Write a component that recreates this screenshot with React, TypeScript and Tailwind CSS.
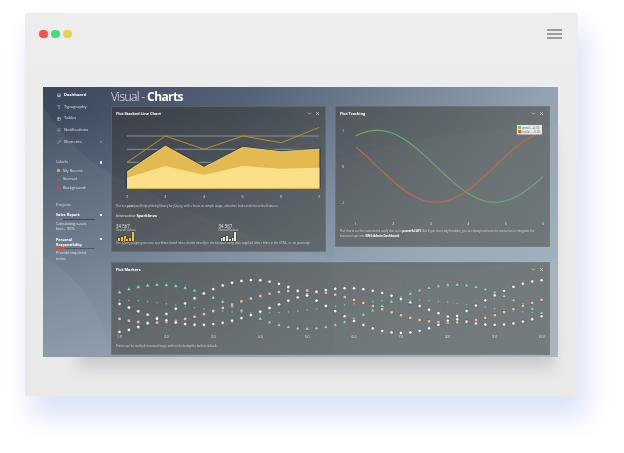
import { ChevronDown, ChevronLeft, Home, Type, Table2, Bell, Pencil, X } from "lucide-react";
import type { ReactNode } from "react";

const navItems = [
  { label: "Typography", icon: Type },
  { label: "Tables", icon: Table2 },
  { label: "Notifications", icon: Bell },
];

const labelItems = [
  { label: "My Recent", dot: "bg-[#ffc107]" },
  { label: "Starred", dot: "bg-[#6c7480]" },
  { label: "Background", dot: "bg-[#e8491d]" },
];

const markerSeries = [
  { amp: 0.45, off: 7, kind: "diamond" },
  { amp: 1.5, off: 6, kind: "triangle" },
  { amp: 1.1, off: 3, kind: "square" },
  { amp: 1.25, off: 2, kind: "circle" },
  { amp: 1.8, off: 4, kind: "circle" },
];

function PanelControls() {
  return (
    <div className="flex items-center gap-[3px] text-[#d5d8dc]">
      <ChevronDown size={5} strokeWidth={3} />
      <X size={5} strokeWidth={3} />
    </div>
  );
}

function Panel({ title, className, children }: { title: string; className: string; children: ReactNode }) {
  return (
    <section className={`border border-[#7d8894]/40 bg-[#2e2a20]/[.42] ${className}`}>
      <header className="flex h-[13px] items-center justify-between pl-[4px] pr-[5px]">
        <h3 className="text-[3.9px] font-bold text-white">{title}</h3>
        <PanelControls />
      </header>
      {children}
    </section>
  );
}

function StackedChart() {
  const xs = [15, 53.4, 92, 130.6, 169.2, 207.4];
  const line = [42.3, 16, 29.3, 16, 22.7, 7.3];
  const mid = [51.7, 26, 47.3, 27.3, 31.7, 29];
  const low = [57.7, 46, 55, 46, 48.7, 47.7];
  const base = 68.3;
  const pts = (ys: number[]) => ys.map((y, i) => `${xs[i]},${y}`).join(" ");
  const area = (ys: number[]) => `${xs[0]},${base} ${pts(ys)} ${xs[5]},${base}`;
  return (
    <svg width={215} height={81} className="block">
      {[16, 29.3, 42.3].map((y) => (
        <line key={y} x1={15} x2={207} y1={y} y2={y} stroke="#8d9196" strokeWidth={1} />
      ))}
      <polyline points={area(mid)} fill="none" stroke="#2c3a58" strokeWidth={2.4} />
      <polygon points={area(mid)} fill="#e3ba50" />
      <polyline points={pts(mid)} fill="none" stroke="#fbd45f" strokeWidth={0.8} />
      <polygon points={area(low)} fill="#fedf89" />
      <line x1={15} x2={207.4} y1={base} y2={base} stroke="#f5c94f" strokeWidth={0.8} />
      <polyline points={pts(line)} fill="none" stroke="#b8922a" strokeWidth={1} />
      {[2, 3, 4, 5, 6, 7].map((n, i) => (
        <text key={n} x={xs[i]} y={77.5} fontSize={3.6} fill="#dfe2e5" textAnchor="middle">
          {n}
        </text>
      ))}
    </svg>
  );
}

function Sparkline({ values, color }: { values: number[]; color: string }) {
  return (
    <div className="ml-[2px] flex h-[9px] items-end gap-[0.8px]">
      {values.map((h, i) => (
        <div key={i} className={`w-[2px] shadow-[0_0_0_0.5px_#2c3a58] ${color}`} style={{ height: h }} />
      ))}
    </div>
  );
}

function SparkStat({ color, values }: { color: string; values: number[] }) {
  return (
    <div className="w-[107px]">
      <p className="text-[4.4px] leading-[4px] text-[#e6e8ea]">34 567</p>
      <p className="text-[3px] leading-[4px] text-[#d4d7da]">Overall Values</p>
      <Sparkline values={values} color={color} />
    </div>
  );
}

function TrackingChart() {
  const toX = (x: number) => 19.7 + (x - 1) * 37.5;
  const toY = (y: number) => 46.3 - y * 36;
  const curve = (fn: (x: number) => number) => {
    const out: string[] = [];
    for (let x = 1; x <= 6.001; x += 0.1) out.push(`${toX(x).toFixed(1)},${toY(fn(x)).toFixed(1)}`);
    return out.join(" ");
  };
  return (
    <svg width={215} height={109} className="block">
      <polyline points={curve(Math.sin)} fill="none" stroke="#71a96a" strokeWidth={1.1} />
      <polyline points={curve(Math.cos)} fill="none" stroke="#c9693f" strokeWidth={1.1} />
      {[1, 0, -1].map((n) => (
        <text key={n} x={7} y={toY(n) + 1.3} fontSize={3.6} fill="#dfe2e5" textAnchor="middle">
          {n}
        </text>
      ))}
      {[1, 2, 3, 4, 5, 6].map((n) => (
        <text key={n} x={toX(n)} y={105} fontSize={3.6} fill="#dfe2e5" textAnchor="middle">
          {n}
        </text>
      ))}
      <rect x={181} y={5} width={25} height={9.5} fill="#f2f3f4" fillOpacity={0.92} />
      <rect x={182} y={6} width={3} height={3} fill="#63d455" />
      <rect x={182} y={10} width={3} height={3} fill="#f15a22" />
      <text x={186} y={8.8} fontSize={3} fill="#555b62">sin(x) = -0.33</text>
      <text x={186} y={12.8} fontSize={3} fill="#555b62">cos(x) = -0.35</text>
    </svg>
  );
}

function MarkerChart() {
  const toX = (x: number) => 7.5 + (x - 1) * 46.9;
  const toY = (y: number) => 30.5 - y * 14.7;
  const ticks = [1, 2, 3, 4, 5, 6, 7, 8, 9, 10];
  const marks: ReactNode[] = [];
  markerSeries.forEach((s) => {
    for (let i = 0; i <= 45; i++) {
      const x = 1 + i * 0.2;
      const cx = toX(x);
      const cy = toY(s.amp * Math.sin(x + s.off));
      const key = `${s.kind}-${s.off}-${i}`;
      if (s.kind === "circle") {
        marks.push(<circle key={key} cx={cx} cy={cy} r={1.7} fill="#fafafa" stroke="#3c4148" strokeWidth={0.5} />);
      } else if (s.kind === "square") {
        marks.push(<rect key={key} x={cx - 1.5} y={cy - 1.5} width={3} height={3} fill="#f2b8af" stroke="#4a4f55" strokeWidth={0.4} />);
      } else if (s.kind === "triangle") {
        marks.push(
          <polygon
            key={key}
            points={`${cx},${cy - 1.9} ${cx + 2},${cy + 1.5} ${cx - 2},${cy + 1.5}`}
            fill="#86e3d2"
            stroke="#454b52"
            strokeWidth={0.3}
          />,
        );
      } else {
        marks.push(<rect key={key} x={cx - 0.7} y={cy - 0.7} width={1.4} height={1.4} fill="#6fc4b2" transform={`rotate(45 ${cx} ${cy})`} />);
      }
    }
  });
  return (
    <svg width={437} height={66} className="block">
      {ticks.map((n) => (
        <line key={n} x1={toX(n)} x2={toX(n)} y1={4} y2={58} stroke="#ffffff" strokeOpacity={0.05} strokeWidth={0.5} />
      ))}
      {marks}
      {ticks.map((n) => (
        <text key={n} x={toX(n)} y={62} fontSize={3.4} fill="#dfe2e5" textAnchor="middle">
          {n.toFixed(1)}
        </text>
      ))}
    </svg>
  );
}

function Sidebar() {
  return (
    <aside className="relative w-[68px] shrink-0 pl-[13px] pr-[10px] text-[#dfe3e7]">
      <ul className="pt-[2px] text-[4.1px]">
        <li className="flex h-[12px] items-center gap-[3px] pl-[1px] font-bold text-white">
          <Home size={4} strokeWidth={2.5} />
          Dashboard
        </li>
        {navItems.map((item) => (
          <li key={item.label} className="flex h-[11.7px] items-center gap-[3px] pl-[1px]">
            <item.icon size={4} strokeWidth={2} />
            {item.label}
          </li>
        ))}
        <li className="flex h-[11.7px] items-center pl-[1px]">
          <Pencil size={4} strokeWidth={2} className="mr-[3px]" />
          Elements
          <ChevronLeft size={4} strokeWidth={3} className="ml-auto mr-[-2px]" />
        </li>
      </ul>

      <div className="mt-[10px] flex h-[9px] items-center justify-between text-[4px]">
        Labels
        <span className="mr-[-1px] h-[2.5px] w-[2.5px] rounded-full bg-white" />
      </div>
      <ul className="text-[4px]">
        {labelItems.map((item) => (
          <li key={item.label} className="flex h-[8.4px] items-center gap-[3px] pl-[1px]">
            <span className={`h-[3px] w-[3px] rounded-full ${item.dot}`} />
            {item.label}
          </li>
        ))}
      </ul>

      <p className="mt-[10px] h-[6px] text-[4px] leading-[6px]">Projects</p>
      <div className="mt-[4px] flex items-center justify-between text-[3.8px] font-bold leading-[6px] text-white">
        Sales Report
        <span className="mr-[-1px] h-[2.5px] w-[2.5px] bg-white" />
      </div>
      <div className="mt-[1px] h-[1px] w-[39px] bg-[#3e4a5a]">
        <div className="h-[1px] w-[7px] bg-[#3d8fd1]" />
      </div>
      <p className="mt-[1px] w-[34px] text-[3.8px] leading-[5.4px]">Calculating x-axis bias... 85%</p>

      <div className="mt-[5px] flex items-start justify-between text-[3.7px] font-bold leading-[5.7px] text-white">
        <span>
          Personal
          <br />
          Responsibility
        </span>
        <span className="mr-[-1px] mt-[1px] h-[2.5px] w-[2.5px] bg-white" />
      </div>
      <div className="h-[1.3px] w-[39px] bg-[#4d5966]">
        <div className="h-[1.3px] w-[9px] bg-[#e0431b]" />
      </div>
      <p className="mt-[1px] w-[32px] text-[3.8px] leading-[5.4px]">Provide required notes</p>
    </aside>
  );
}

export default function App() {
  return (
    <div className="h-[453px] w-[624px] overflow-hidden bg-white pl-[25px] pt-[13px] font-['Open_Sans',sans-serif]">
      <div className="flex h-[383px] w-[553px] flex-col rounded-t-[4px] bg-[linear-gradient(to_bottom,#ecedec,#e9e9e8)] shadow-[7px_18px_28px_2px_#d9e2f6]">
        <div className="flex h-[42px] shrink-0 items-center justify-between pl-[14px] pr-[16px]">
          <div className="flex gap-[3.5px]">
            <span className="h-[8.5px] w-[8.5px] rounded-full bg-[#fd4d52]" />
            <span className="h-[8.5px] w-[8.5px] rounded-full bg-[#3fe072]" />
            <span className="h-[8.5px] w-[8.5px] rounded-full bg-[#e8d34a]" />
          </div>
          <div className="flex w-[15px] flex-col gap-[2.5px]">
            <span className="h-[1.5px] bg-[#9a9c9c]" />
            <span className="h-[1.5px] bg-[#9a9c9c]" />
            <span className="h-[1.5px] bg-[#9a9c9c]" />
          </div>
        </div>

        <div className="ml-[18px] mt-[32px] w-[515px] shadow-[15px_30px_15px_-20px_#c8c8cc]">
          <div className="relative flex h-[270px] overflow-hidden bg-[linear-gradient(to_bottom,rgba(160,175,188,0)_10%,rgba(160,175,188,.6)),linear-gradient(125deg,#3a465a_0%,#556379_30%,#93a2b1_72%,#a0afbc_100%)] blur-[0.35px]">
            <svg width={515} height={270} className="absolute left-0 top-0">
              <path d="M0 18 C25 60 50 80 90 98 C170 135 230 165 330 178 C400 186 470 178 515 170 L515 270 L0 270 Z" fill="#ffffff" fillOpacity={0.05} />
              <path d="M0 170 C40 190 60 230 68 270 L0 270 Z" fill="#ffffff" fillOpacity={0.05} />
              <path d="M292 72 C370 50 450 42 515 38 L515 270 L292 270 Z" fill="#ffffff" fillOpacity={0.04} />
            </svg>

            <Sidebar />

            <main className="relative min-w-0 flex-1">
              <h1 className="flex h-[19px] items-center text-[12px] font-light leading-none tracking-[-0.6px] text-[#e8ebee]">
                Visual -&nbsp;<span className="font-bold text-white">Charts</span>
              </h1>

              <div className="flex items-start gap-[9px]">
                <Panel title="Flot Stacked Line Chart" className="h-[146px] w-[215px]">
                  <StackedChart />
                  <div className="px-[4px]">
                    <p className="mt-[3px] whitespace-nowrap text-[2.9px] leading-[5px] text-[#d4d7da]">
                      Flot is a <b>pure</b> JavaScript plotting library for jQuery, with a focus on simple usage, attractive looks and interactive features.
                    </p>
                    <h4 className="mt-[4px] text-[3.95px] leading-[6px] text-[#e6e8ea]">
                      Interactive <b className="text-white">Sparklines</b>
                    </h4>
                    <div className="mt-[5px] flex">
                      <SparkStat values={[3, 4, 5, 2, 3, 9]} color="bg-[#f2bf35]" />
                      <SparkStat values={[3, 4, 5, 2, 3, 9]} color="bg-[#f3e7bd]" />
                    </div>
                    <p className="whitespace-nowrap text-[2.9px] leading-[4px] text-[#d4d7da]">
                      The jQuery plugin generates sparklines (small inline charts) directly in the browser using data supplied either inline in the HTML, or via javascript.
                    </p>
                  </div>
                </Panel>

                <Panel title="Flot Tracking" className="h-[141px] w-[215px]">
                  <TrackingChart />
                  <p className="px-[4px] text-[2.9px] leading-[5px] text-[#d4d7da]">
                    Flot charts can be customized easily due to its <b className="text-white">powerful API</b>. But if you meet any troubles, you are always welcome to contact us to integrate the business logic into <b className="text-white">SING Admin Dashboard</b>.
                  </p>
                </Panel>
              </div>

              <Panel title="Flot Markers" className="mt-[10px] h-[93px] w-[439px]">
                <MarkerChart />
                <p className="mt-[2px] whitespace-nowrap px-[4px] text-[2.9px] leading-[5px] text-[#d4d7da]">
                  Points can be marked in several ways, with circles being the built-in default.
                </p>
              </Panel>
            </main>
          </div>
        </div>
      </div>
    </div>
  );
}
